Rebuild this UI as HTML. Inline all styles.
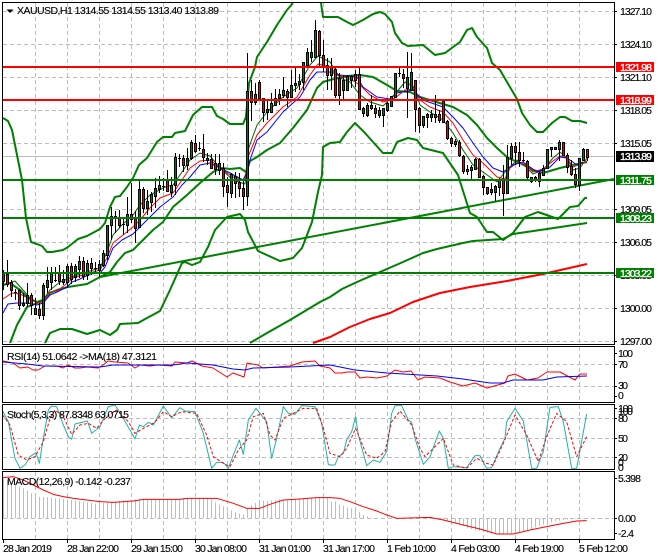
<!DOCTYPE html>
<html><head><meta charset="utf-8"><style>
html,body{margin:0;padding:0;background:#fff;width:660px;height:560px;overflow:hidden}
svg{display:block}
text{font-family:"Liberation Sans",sans-serif;font-size:10.5px;fill:#000;stroke:#000;stroke-width:.12}
.g{stroke:#bdbdbd;stroke-width:1;stroke-dasharray:4 3;fill:none}
.l{fill:none;stroke-linejoin:round}
text.w{fill:#fff;stroke:#fff;stroke-width:.35}
</style></head><body>
<svg width="660" height="560" viewBox="0 0 660 560" xmlns="http://www.w3.org/2000/svg">
<rect width="660" height="560" fill="#fff"/>
<!-- grid -->
<path class="g" d="M35.5 3V344M67.5 3V344M99.5 3V344M131.5 3V344M163.5 3V344M195.5 3V344M227.5 3V344M259.5 3V344M291.5 3V344M323.5 3V344M355.5 3V344M387.5 3V344M419.5 3V344M451.5 3V344M483.5 3V344M515.5 3V344M547.5 3V344M579.5 3V344"/>
<path class="g" d="M3 11.5H614M3 44.5H614M3 77.5H614M3 110.5H614M3 143.5H614M3 209.5H614M3 242.5H614M3 275.5H614M3 308.5H614M3 341.5H614"/>
<path class="g" d="M35.5 347V402M67.5 347V402M99.5 347V402M131.5 347V402M163.5 347V402M195.5 347V402M227.5 347V402M259.5 347V402M291.5 347V402M323.5 347V402M355.5 347V402M387.5 347V402M419.5 347V402M451.5 347V402M483.5 347V402M515.5 347V402M547.5 347V402M579.5 347V402M3 364.5H614M3 386.5H614"/>
<path class="g" d="M35.5 405V469M67.5 405V469M99.5 405V469M131.5 405V469M163.5 405V469M195.5 405V469M227.5 405V469M259.5 405V469M291.5 405V469M323.5 405V469M355.5 405V469M387.5 405V469M419.5 405V469M451.5 405V469M483.5 405V469M515.5 405V469M547.5 405V469M579.5 405V469M3 418.5H614M3 438.5H614M3 457.5H614"/>
<path class="g" d="M35.5 472V539M67.5 472V539M99.5 472V539M131.5 472V539M163.5 472V539M195.5 472V539M227.5 472V539M259.5 472V539M291.5 472V539M323.5 472V539M355.5 472V539M387.5 472V539M419.5 472V539M451.5 472V539M483.5 472V539M515.5 472V539M547.5 472V539M579.5 472V539M3 518.5H614"/>
<path d="M3 156.5H614" stroke="#bdbdbd" fill="none"/>

<!-- bollinger / MAs -->
<g class="l" stroke="#008000" stroke-width="2" fill="none">
<polyline class="l" points="3,118 8,121 12,130 17,155 22,180 26,218 31,242 37,244 42,246 47,252 52,252 63,250 68,247 78,239 87,236 100,229 105,223 110,207 115,197 120,196 127,187 133,178 139,165 147,158 157,142 163,137 172,137 175,133 185,131 193,115 202,107 212,107 217,116 223,119 230,124 243,124 246,117 249,83 255,67 257,57 267,42 277,25 287,10 293,3"/>
<polyline class="l" points="321,3 323,17 330,17 338,17 347,22 353,25 363,20 373,14 380,12 385,14 392,22 395,33 402,43 408,46 423,45 435,55 445,53 460,42 467,30 472,28 477,37 487,48 492,63 500,70 507,82 517,99 522,113 530,125 537,132 543,132 552,123 560,117 565,117 572,121 580,121 587,123"/>
<polyline class="l" points="3,285 10,283 20,290 28,298 37,302 43,300 50,293 57,290 68,287 87,284 100,277 110,272 117,262 125,253 133,250 143,240 153,230 163,222 173,207 187,195 200,183 213,172 222,168 230,169 240,168 246,172 250,161 257,157 267,150 280,143 293,128 307,110 317,88 323,82 330,80 347,76 360,75 373,77 387,85 397,91 410,92 420,97 433,101 453,107 467,115 477,125 487,138 497,148 508,158 520,163 533,170 543,173 560,168 573,165 587,162"/>
<polyline class="l" points="10,343 17,325 27,307 40,302"/>
<polyline class="l" points="45,343 50,333 60,329 72,329 87,334 100,330 110,335 117,330 120,324 138,323 147,318 160,311 170,290 182,263 185,262 192,265 200,262 208,247 215,230 227,217 240,214 245,220 248,232 258,251 280,261 293,258 302,248 312,222 318,192 322,175 323,147 330,143 340,142 347,132 355,123 365,133 373,142 383,153 392,153 397,142 408,138 417,140 423,148 443,153 458,175 470,213 477,217 487,232 493,232 503,240 513,233 525,217 538,212 558,219 570,207 578,206 585,198 587,198"/>
<polyline class="l" points="250,343 267,333 290,320 320,302 330,297 342,289 357,282 380,272 403,262 423,253 437,249 463,243 473,241 503,239 513,234 547,229 587,223"/>
</g>
<polyline class="l" stroke="#f00" stroke-width="2" points="313,343 330,337 350,327 370,319 390,313 413,302 440,293 470,287 507,281 543,274 587,264"/>
<path d="M100 277L614 179" stroke="#008000" stroke-width="2" fill="none"/>
<polyline class="l" stroke="#006400" stroke-width="1" points="3,285 15,281 23,290 30,298 37,303 43,300 50,290 60,282 70,278 80,274 100,268 107,252 113,235 122,225 133,215 140,205 150,195 165,187 173,185 182,172 190,160 200,153 210,156 220,168 233,180 245,184 248,150 257,125 267,112 283,97 297,88 310,65 318,56 330,62 340,78 350,82 360,95 370,102 383,106 395,94 405,82 413,86 420,105 430,112 443,120 453,133 463,150 473,165 483,172 497,182 505,172 517,160 525,166 533,174 543,170 553,158 560,152 567,158 573,170 580,168 587,158"/>
<polyline class="l" stroke="#f00" stroke-width="1" points="3,299 12,293 20,294 28,298 37,303 43,302 50,292 57,291 65,285 73,278 83,275 100,270 107,258 113,243 123,235 133,227 140,220 150,208 160,198 173,193 182,180 190,168 200,161 210,160 220,168 233,177 245,180 248,157 257,135 267,123 283,107 297,97 310,75 318,64 330,67 337,75 350,79 360,85 370,95 383,102 395,98 405,90 413,89 420,100 430,107 443,112 453,123 463,140 473,155 483,163 497,177 505,179 510,168 517,163 525,164 533,172 543,169 553,161 560,156 567,158 573,167 580,164 587,161"/>
<polyline class="l" stroke="#00f" stroke-width="1" points="3,313 8,304 17,303 27,303 37,305 43,303 50,295 57,292 67,287 72,282 80,279 90,274 100,273 105,267 113,248 122,240 133,234 140,227 147,220 160,207 173,197 182,185 190,177 200,165 210,163 220,168 230,173 243,180 248,170 250,160 257,140 267,132 283,112 293,103 300,97 310,80 317,72 330,72 340,75 357,77 363,87 377,97 390,99 397,93 413,90 423,100 443,107 453,117 463,128 473,143 483,157 493,168 503,172 513,165 523,162 537,172 550,167 560,157 567,158 577,165 583,162"/>

<!-- wicks -->
<path stroke="#000" fill="none" d="M3.5 270V290M7.5 260V287M11.5 280V297M15.5 289V300M19.5 289V310M23.5 293V307M27.5 283V307M31.5 293V315M35.5 298V315M39.5 303V319M43.5 283V320M47.5 267V293M51.5 267V290M55.5 267V282M59.5 265V285M63.5 270V285M67.5 264V288M71.5 263V284M75.5 264V282M79.5 256V278M83.5 257V280M87.5 260V280M91.5 258V275M95.5 262V272M99.5 260V277M103.5 250V267M107.5 225V260M111.5 207V240M115.5 211V233M119.5 210V228M123.5 217V235M127.5 197V233M131.5 183V223M135.5 211V243M139.5 180V228M143.5 187V213M147.5 190V215M151.5 192V212M155.5 178V208M159.5 176V193M163.5 178V191M167.5 170V192M171.5 177V197M175.5 153V195M179.5 154V167M183.5 155V172M187.5 148V170M191.5 140V160M195.5 135V153M199.5 142V151M203.5 134V162M207.5 153V165M211.5 154V169M215.5 154V175M219.5 154V175M223.5 163V197M227.5 177V207M231.5 173V198M235.5 172V198M239.5 173V197M243.5 180V210M247.5 53V206M251.5 80V121M255.5 83V105M259.5 80V100M263.5 98V122M267.5 100V120M271.5 93V112M275.5 89V105M279.5 89V105M283.5 77V98M287.5 89V107M291.5 70V97M295.5 68V92M299.5 74V90M303.5 62V90M307.5 48V65M311.5 40V62M315.5 20V57M319.5 30V67M323.5 40V72M327.5 58V90M331.5 58V90M335.5 67V98M339.5 73V105M343.5 75V100M347.5 75V90M351.5 75V88M355.5 70V87M359.5 67V110M363.5 107V117M367.5 103V117M371.5 95V110M375.5 105V118M379.5 107V118M383.5 108V127M387.5 102V112M391.5 96V107M395.5 73V98M399.5 67V77M403.5 69V88M407.5 52V118M411.5 53V90M415.5 80V132M419.5 107V133M423.5 116V128M427.5 113V128M431.5 110V122M435.5 95V123M439.5 110V123M443.5 100V123M447.5 120V140M451.5 137V147M455.5 139V147M459.5 140V157M463.5 155V174M467.5 165V175M471.5 165V179M475.5 158V170M479.5 158V178M483.5 175V195M487.5 187V195M491.5 183V195M495.5 185V201M499.5 178V196M503.5 165V216M507.5 145V193M511.5 143V165M515.5 142V165M519.5 142V167M523.5 152V162M527.5 160V179M531.5 177V183M535.5 176V182M539.5 172V187M543.5 165V176M547.5 149V169M551.5 147V157M555.5 147V150M559.5 140V161M563.5 142V155M567.5 153V173M571.5 160V176M575.5 168V188M579.5 158V191M583.5 148V161M587.5 149V161"/>
<path stroke="#000" fill="none" d="M14 292.5h3M54 280.5h3M94 268.5h3M114 216.5h3M122 224.5h3M162 186.5h3M178 158.5h3M198 148.5h3M398 73.5h3M522 160.5h3"/>
<!-- green bodies -->
<path stroke="#000" fill="#007a00" d="M2.5 273.5h2v8h-2zM22.5 303.5h2v2h-2zM26.5 295.5h2v8h-2zM34.5 308.5h2v6h-2zM42.5 285.5h2v30h-2zM46.5 280.5h2v7h-2zM50.5 272.5h2v10h-2zM62.5 279.5h2v3h-2zM66.5 266.5h2v16h-2zM74.5 266.5h2v11h-2zM78.5 261.5h2v8h-2zM86.5 263.5h2v12h-2zM98.5 264.5h2v6h-2zM102.5 253.5h2v12h-2zM106.5 225.5h2v30h-2zM110.5 216.5h2v9h-2zM126.5 214.5h2v11h-2zM138.5 189.5h2v38h-2zM146.5 201.5h2v7h-2zM150.5 194.5h2v8h-2zM154.5 188.5h2v8h-2zM158.5 185.5h2v4h-2zM170.5 185.5h2v7h-2zM174.5 157.5h2v28h-2zM186.5 158.5h2v7h-2zM190.5 142.5h2v16h-2zM206.5 158.5h2v2h-2zM218.5 163.5h2v7h-2zM230.5 174.5h2v19h-2zM246.5 91.5h2v105h-2zM254.5 94.5h2v8h-2zM266.5 109.5h2v3h-2zM270.5 103.5h2v9h-2zM274.5 98.5h2v7h-2zM278.5 94.5h2v4h-2zM282.5 90.5h2v5h-2zM290.5 85.5h2v12h-2zM294.5 83.5h2v2h-2zM298.5 81.5h2v3h-2zM302.5 62.5h2v20h-2zM306.5 52.5h2v13h-2zM310.5 52.5h2v5h-2zM314.5 30.5h2v27h-2zM330.5 67.5h2v8h-2zM342.5 80.5h2v10h-2zM346.5 76.5h2v14h-2zM350.5 76.5h2v4h-2zM362.5 108.5h2v5h-2zM366.5 105.5h2v10h-2zM378.5 110.5h2v5h-2zM382.5 108.5h2v7h-2zM386.5 103.5h2v7h-2zM390.5 96.5h2v10h-2zM394.5 73.5h2v24h-2zM406.5 77.5h2v11h-2zM410.5 72.5h2v18h-2zM422.5 116.5h2v9h-2zM426.5 114.5h2v3h-2zM430.5 114.5h2v3h-2zM434.5 114.5h2v3h-2zM454.5 141.5h2v3h-2zM466.5 169.5h2v2h-2zM470.5 167.5h2v3h-2zM474.5 159.5h2v10h-2zM490.5 189.5h2v3h-2zM494.5 186.5h2v6h-2zM498.5 179.5h2v8h-2zM506.5 157.5h2v36h-2zM510.5 146.5h2v12h-2zM530.5 177.5h2v4h-2zM542.5 168.5h2v7h-2zM546.5 149.5h2v19h-2zM550.5 147.5h2v2h-2zM554.5 147.5h2v2h-2zM558.5 142.5h2v7h-2zM578.5 158.5h2v27h-2zM582.5 149.5h2v11h-2z"/>
<!-- red bodies -->
<path stroke="#000" fill="#d01010" d="M6.5 274.5h2v10h-2zM10.5 282.5h2v8h-2zM18.5 290.5h2v15h-2zM30.5 295.5h2v10h-2zM38.5 309.5h2v6h-2zM58.5 273.5h2v8h-2zM70.5 266.5h2v13h-2zM82.5 261.5h2v15h-2zM90.5 263.5h2v5h-2zM118.5 218.5h2v7h-2zM130.5 214.5h2v5h-2zM134.5 218.5h2v10h-2zM142.5 189.5h2v19h-2zM166.5 180.5h2v11h-2zM182.5 158.5h2v7h-2zM194.5 143.5h2v8h-2zM202.5 149.5h2v8h-2zM210.5 159.5h2v9h-2zM214.5 163.5h2v6h-2zM222.5 168.5h2v18h-2zM226.5 185.5h2v7h-2zM234.5 176.5h2v7h-2zM238.5 182.5h2v6h-2zM242.5 188.5h2v8h-2zM250.5 91.5h2v11h-2zM258.5 82.5h2v16h-2zM262.5 98.5h2v14h-2zM286.5 91.5h2v6h-2zM318.5 31.5h2v24h-2zM322.5 55.5h2v12h-2zM326.5 65.5h2v10h-2zM334.5 69.5h2v26h-2zM338.5 78.5h2v17h-2zM354.5 74.5h2v6h-2zM358.5 74.5h2v35h-2zM370.5 105.5h2v3h-2zM374.5 108.5h2v5h-2zM402.5 74.5h2v4h-2zM414.5 80.5h2v29h-2zM418.5 108.5h2v17h-2zM438.5 114.5h2v6h-2zM442.5 101.5h2v21h-2zM446.5 121.5h2v17h-2zM450.5 138.5h2v5h-2zM458.5 142.5h2v13h-2zM462.5 156.5h2v15h-2zM478.5 159.5h2v18h-2zM482.5 176.5h2v11h-2zM486.5 187.5h2v6h-2zM502.5 179.5h2v14h-2zM514.5 146.5h2v6h-2zM518.5 152.5h2v8h-2zM526.5 161.5h2v16h-2zM534.5 177.5h2v3h-2zM538.5 173.5h2v8h-2zM562.5 142.5h2v13h-2zM566.5 155.5h2v12h-2zM570.5 166.5h2v8h-2zM574.5 174.5h2v10h-2zM586.5 149.5h2v8h-2z"/>

<!-- horizontal lines -->
<rect x="3" y="66" width="611" height="2" fill="#f00"/>
<rect x="3" y="99" width="611" height="2" fill="#f00"/>
<rect x="3" y="179" width="611" height="2" fill="#008000"/>
<rect x="3" y="217" width="611" height="2" fill="#008000"/>
<rect x="3" y="272" width="611" height="2" fill="#008000"/>

<!-- RSI -->
<polyline class="l" stroke="#f00" points="3,361 13,363 20,368 28,367 33,370 38,370 45,366 57,366 63,368 68,365 75,368 80,368 87,367 98,368 103,365 108,361 115,362 128,363 135,368 140,365 150,366 158,365 172,366 175,362 187,363 192,361 202,366 213,368 227,377 233,373 244,377 247,363 258,365 263,368 290,366 302,362 315,361 320,366 330,368 335,373 342,373 347,372 355,372 360,378 367,377 377,378 387,376 395,370 403,372 411,371 418,380 425,377 440,378 450,382 463,386 475,383 487,388 505,383 508,376 515,374 527,380 538,378 547,372 560,372 575,380 580,374 587,374"/>
<polyline class="l" stroke="#00f" points="3,362 27,364 43,366 100,367 113,365 173,365 187,363 213,365 233,369 245,370 253,368 290,367 330,365 355,370 387,373 437,376 463,379 490,383 503,383 513,380 543,380 557,377 587,376"/>

<!-- Stochastic (zoom coordinates) -->
<g transform="translate(0 345) scale(.33333)" fill="none" stroke-width="3" stroke-linejoin="round">
<polyline stroke="#20b2aa" points="8,198 25,230 45,340 60,370 75,360 90,335 108,323 118,355 130,280 145,195 155,183 170,185 190,240 205,275 215,283 225,237 262,228 275,265 300,245 325,185 345,180 370,220 390,255 405,282 418,240 430,245 445,232 460,240 490,183 515,218 540,188 555,198 585,200 610,265 635,370 650,352 670,352 685,370 700,330 718,285 730,328 745,225 768,190 800,230 815,340 830,280 850,185 865,205 885,208 905,182 945,185 965,235 985,358 990,360 1005,360 1015,335 1030,325 1040,285 1055,260 1067,215 1075,270 1100,362 1120,345 1140,352 1160,320 1175,205 1185,182 1205,182 1225,225 1235,232 1245,280 1270,358 1290,335 1318,258 1330,280 1345,370 1360,365 1400,368 1425,332 1440,332 1460,370 1475,368 1500,310 1515,280 1520,230 1545,190 1570,228 1595,370 1610,370 1630,320 1650,187 1675,185 1690,230 1715,370 1730,370 1760,207"/>
<polyline stroke="#f00" stroke-dasharray="9 6" points="8,210 30,240 55,330 80,345 105,335 130,290 150,220 165,195 190,215 215,268 240,240 265,235 290,250 320,215 350,195 385,230 405,265 430,250 465,232 490,200 515,215 545,200 590,205 620,270 640,335 670,355 690,365 715,315 740,285 760,215 790,205 810,270 825,285 850,220 880,205 910,190 950,190 970,250 990,325 1020,335 1040,310 1067,250 1100,330 1130,340 1155,320 1175,230 1200,198 1235,240 1260,310 1275,335 1300,310 1330,280 1360,360 1400,370 1430,340 1460,355 1480,360 1510,295 1545,210 1580,270 1615,350 1640,275 1670,205 1700,230 1730,335 1760,275"/>
</g>

<!-- MACD (zoom coordinates) -->
<g transform="translate(0 345) scale(.33333)" fill="none" stroke-linejoin="round">
<path stroke="#bdbdbd" stroke-width="3" d="M10.5 520V398M22.5 520V405M34.5 520V412M46.5 520V420M58.5 520V425M70.5 520V430M82.5 520V437M94.5 520V445M106.5 520V452M118.5 520V456M130.5 520V456M142.5 520V456M154.5 520V458M166.5 520V460M178.5 520V460M190.5 520V462M202.5 520V464M214.5 520V465M226.5 520V467M238.5 520V468M250.5 520V470M262.5 520V472M274.5 520V474M286.5 520V476M298.5 520V476M310.5 520V474M322.5 520V474M334.5 520V472M346.5 520V470M358.5 520V468M370.5 520V466M382.5 520V466M394.5 520V464M406.5 520V464M418.5 520V463M430.5 520V463M442.5 520V463M454.5 520V463M466.5 520V463M478.5 520V463M490.5 520V463M502.5 520V463M514.5 520V463M526.5 520V463M538.5 520V463M550.5 520V460M562.5 520V460M574.5 520V460M586.5 520V460M598.5 520V460M610.5 520V461M622.5 520V462M634.5 520V463M646.5 520V472M658.5 520V478M670.5 520V484M682.5 520V490M694.5 520V496M706.5 520V502M718.5 520V506M730.5 520V508M742.5 520V490M754.5 520V480M766.5 520V474M778.5 520V468M790.5 520V467M802.5 520V468M814.5 520V466M826.5 520V466M838.5 520V464M850.5 520V464M862.5 520V464M874.5 520V462M886.5 520V462M898.5 520V462M910.5 520V461M922.5 520V460M934.5 520V458M946.5 520V458M958.5 520V458M970.5 520V457M982.5 520V457"/>
<path stroke="#bdbdbd" stroke-width="3" transform="translate(990 0)" d="M4.5 520V470M16.5 520V470M28.5 520V478M40.5 520V482M52.5 520V488M64.5 520V490M76.5 520V495M88.5 520V500M100.5 520V510M112.5 520V514M124.5 520V518M316.5 520V522M328.5 520V524M340.5 520V526M352.5 520V528M364.5 520V530M376.5 520V534M388.5 520V538M400.5 520V543M412.5 520V548M424.5 520V552M436.5 520V555M448.5 520V558M460.5 520V560M472.5 520V563M484.5 520V565M496.5 520V567M508.5 520V568M520.5 520V568M532.5 520V568M544.5 520V566M556.5 520V565M568.5 520V561M580.5 520V558M592.5 520V555M604.5 520V552M616.5 520V547M628.5 520V542M640.5 520V538M652.5 520V535M664.5 520V532M676.5 520V530M688.5 520V527M700.5 520V525M712.5 520V524M724.5 520V523M736.5 520V522M748.5 520V522M760.5 520V522M772.5 520V522"/>
<polyline stroke="#f00" stroke-width="3" points="8,398 40,395 70,405 100,420 130,435 160,448 190,455 220,460 260,465 300,470 340,472 400,468 430,463 540,463 560,460 650,460 700,475 740,490 780,490 810,478 850,465 900,462 950,458 990,458 1020,460 1050,470 1090,485 1130,498 1160,510 1190,520 1290,517 1330,525 1390,540 1440,552 1490,567 1540,567 1590,555 1640,545 1690,535 1730,528 1760,527"/>
</g>

<!-- frames -->
<g fill="none" stroke="#000">
<path d="M2.5 2.5H614.5V344.5H2.5Z"/>
<path d="M2.5 346.5H614.5V402.5H2.5Z"/>
<path d="M2.5 404.5H614.5V469.5H2.5Z"/>
<path d="M2.5 471.5H614.5V539.5H2.5Z"/>
<path d="M614 11.5h3M614 44.5h3M614 77.5h3M614 110.5h3M614 143.5h3M614 209.5h3M614 242.5h3M614 275.5h3M614 308.5h3M614 341.5h3M614 353.5h3M614 364.5h3M614 386.5h3M614 396.5h3M614 408.5h3M614 418.5h3M614 438.5h3M614 457.5h3M614 478.5h3M614 518.5h3M614 533.5h3"/>
<path d="M3.5 539v4M67.5 539v4M131.5 539v4M195.5 539v4M259.5 539v4M323.5 539v4M387.5 539v4M451.5 539v4M515.5 539v4M579.5 539v4"/>
</g>

<!-- header -->
<polygon points="6.5,9.5 13.5,9.5 10,13" fill="#000"/>
<text x="17" y="14" textLength="202">XAUUSD,H1  1314.55 1314.55 1313.40 1313.89</text>
<text x="7" y="360" textLength="150">RSI(14) 51.0642  -&gt;MA(18) 47.3121</text>
<text x="7" y="418" textLength="122">Stoch(5,3,3) 87.8348 63.0715</text>
<text x="7" y="485" textLength="124">MACD(12,26,9) -0.142 -0.237</text>

<!-- price axis -->
<g>
<text x="620" y="15" textLength="32">1327.10</text>
<text x="620" y="48" textLength="32">1324.10</text>
<text x="620" y="81" textLength="32">1321.10</text>
<text x="620" y="114" textLength="32">1318.05</text>
<text x="620" y="147" textLength="32">1315.05</text>
<text x="620" y="213" textLength="32">1309.05</text>
<text x="620" y="246" textLength="32">1306.05</text>
<text x="620" y="279" textLength="32">1303.05</text>
<text x="620" y="312" textLength="32">1300.00</text>
<text x="620" y="345" textLength="32">1297.00</text>
<text x="618" y="357" textLength="15">100</text>
<text x="618" y="368" textLength="10">70</text>
<text x="618" y="389" textLength="10">30</text>
<text x="618" y="399" textLength="5">0</text>
<text x="618" y="412" textLength="15">100</text>
<text x="618" y="415" textLength="15">100</text>
<text x="618" y="422" textLength="10">80</text>
<text x="618" y="442" textLength="10">50</text>
<text x="618" y="461" textLength="10">20</text>
<text x="618" y="466" textLength="5">0</text>
<text x="618" y="471" textLength="5">0</text>
<text x="618" y="482" textLength="23">5.398</text>
<text x="618" y="522" textLength="18">0.00</text>
<text x="618" y="537" textLength="16">-2.4</text>
</g>
<!-- price labels -->
<rect x="616" y="62" width="38" height="10" fill="#f00"/><text class="w" x="620" y="71" textLength="32">1321.98</text>
<rect x="616" y="95" width="38" height="10" fill="#f00"/><text class="w" x="620" y="104" textLength="32">1318.99</text>
<rect x="616" y="151" width="38" height="11" fill="#000"/><text class="w" x="620" y="160" textLength="32">1313.89</text>
<rect x="616" y="175" width="38" height="10" fill="#008000"/><text class="w" x="620" y="184" textLength="32">1311.75</text>
<rect x="616" y="213" width="38" height="10" fill="#008000"/><text class="w" x="620" y="222" textLength="32">1308.23</text>
<rect x="616" y="268" width="38" height="10" fill="#008000"/><text class="w" x="620" y="277" textLength="32">1303.22</text>

<!-- time axis -->
<text x="3" y="552" textLength="49">28 Jan 2019</text>
<text x="67" y="552" textLength="52">28 Jan 22:00</text>
<text x="131" y="552" textLength="52">29 Jan 15:00</text>
<text x="195" y="552" textLength="52">30 Jan 08:00</text>
<text x="259" y="552" textLength="52">31 Jan 01:00</text>
<text x="323" y="552" textLength="52">31 Jan 17:00</text>
<text x="387" y="552" textLength="49">1 Feb 10:00</text>
<text x="451" y="552" textLength="49">4 Feb 03:00</text>
<text x="515" y="552" textLength="49">4 Feb 19:00</text>
<text x="579" y="552" textLength="49">5 Feb 12:00</text>
</svg>
</body></html>
